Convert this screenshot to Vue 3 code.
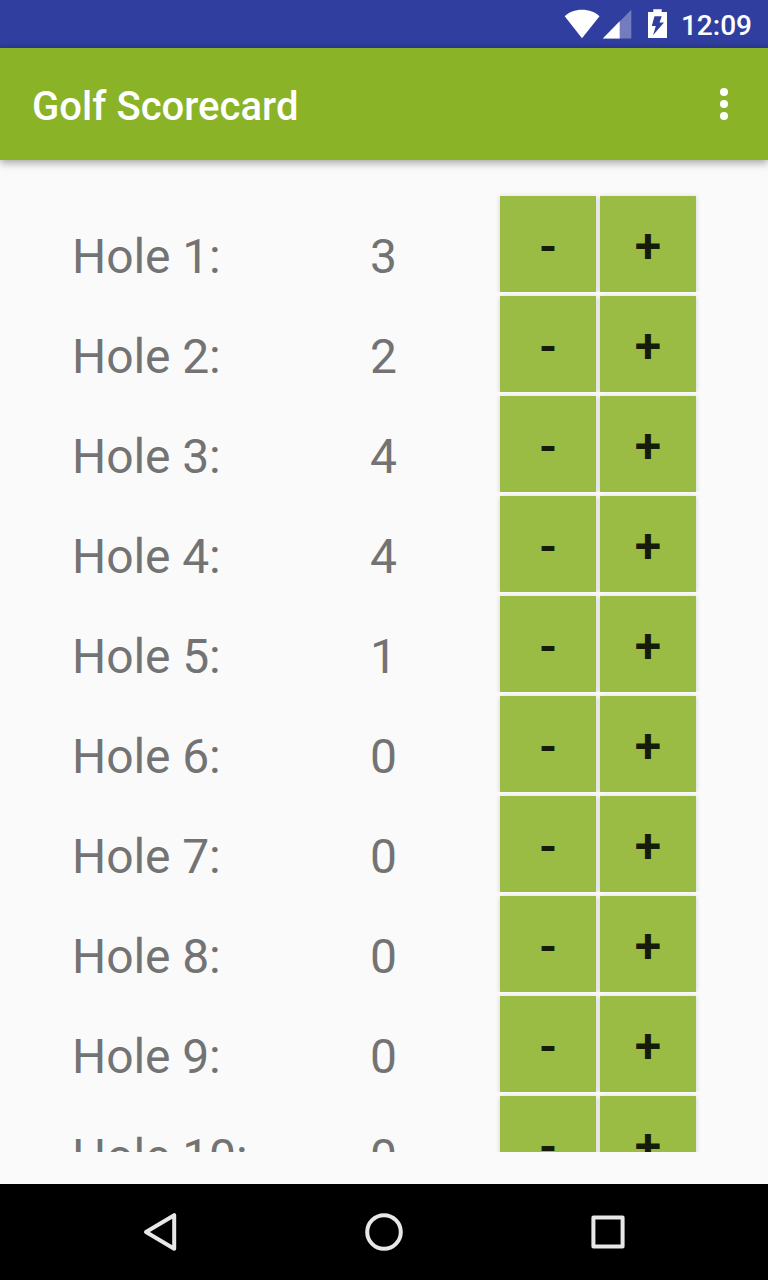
<script setup>
const holes = [3, 2, 4, 4, 1, 0, 0, 0, 0, 0].map((score, i) => ({ label: `Hole ${i + 1}:`, score }))
</script>

<template>
  <div class="screen">
    <header class="status">
      <svg class="status-icons" width="120" height="48" viewBox="556 0 120 48">
        <path d="M564.7 16.2C569 12.2 575 9.8 582 9.8s13.200 2.400 17.500 6.400L582 38.300z" fill="#fff" />
        <path d="M631.300 9.700v28.700H602.800z" fill="#fff" fill-opacity=".32" />
        <path d="M619.700 21.300v17.100H602.800z" fill="#fff" />
        <path fill-rule="evenodd" fill="#fff" d="M653.300 9.200h8.400v2.800h5.300v26h-19V12h5.300zM654.500 16.200h7.300l-2.300 6.400h4.500l-11 12.700 2.800-9.300h-4z" />
      </svg>
      <span class="clock">12:09</span>
    </header>
    <div class="appbar">
      <h1>Golf Scorecard</h1>
      <svg width="8" height="32" viewBox="0 0 8 32" fill="#fff">
        <circle cx="4" cy="4" r="4" /><circle cx="4" cy="16" r="4" /><circle cx="4" cy="28" r="4" />
      </svg>
    </div>
    <main class="content">
      <div class="list">
        <div v-for="hole in holes" :key="hole.label" class="row">
          <span class="label">{{ hole.label }}</span>
          <span class="score">{{ hole.score }}</span>
          <button class="btn minus">-</button>
          <button class="btn plus">+</button>
        </div>
      </div>
    </main>
    <nav class="nav">
      <svg width="768" height="96" viewBox="0 0 768 96" fill="none" stroke="#e8e8e8" stroke-width="4" stroke-linejoin="round">
        <path d="M174.200 31.200v33.600L146 48z" />
        <circle cx="384" cy="48" r="16.800" />
        <rect x="593.400" y="33.400" width="29.200" height="29.200" />
      </svg>
    </nav>
  </div>
</template>

<style>
body { margin: 0; }
</style>

<style scoped>
.screen {
  display: flex;
  flex-direction: column;
  width: 768px;
  height: 1280px;
  overflow: hidden;
  background: #fafafa;
  font-family: Roboto, "Liberation Sans", sans-serif;
}
.status {
  display: flex;
  align-items: center;
  justify-content: flex-end;
  height: 48px;
  padding-right: 16px;
  background: linear-gradient(#303f9f 42px, #2c3a92);
  color: #fff;
}
.status-icons { margin-right: 5px; }
.clock {
  padding-top: 4px;
  font-size: 28px;
  font-weight: 500;
  line-height: 46px;
}
.appbar {
  position: relative;
  display: flex;
  align-items: center;
  justify-content: space-between;
  height: 112px;
  padding: 0 40px 0 32px;
  box-sizing: border-box;
  background: #8bb327;
  color: #fff;
  box-shadow: 0 3px 8px rgba(0, 0, 0, .34);
}
h1 {
  margin: 6px 0 0;
  font-size: 40px;
  font-weight: 500;
  line-height: 48px;
  letter-spacing: .04px;
}
.content {
  flex: 1;
  min-height: 0;
  padding: 32px;
  box-sizing: border-box;
}
.list {
  height: 960px;
  overflow: hidden;
}
.row {
  display: grid;
  grid-template-columns: 298px 130px 96px 96px;
  height: 100px;
  padding: 4px 0 0 40px;
  box-sizing: border-box;
  overflow: hidden;
}
.label, .score {
  padding-top: 33px;
  font-size: 48px;
  line-height: 56px;
  color: #737373;
}
.label { letter-spacing: -.1px; }
.btn {
  width: 96px;
  height: 96px;
  padding: 6px 0 0;
  border: 0;
  border-radius: 0;
  background: #9abc45;
  color: #161b0a;
  font: 600 48px/56px Roboto, "Liberation Sans", sans-serif;
  box-shadow: 0 1px 5px rgba(0, 0, 0, .18);
}
.plus {
  margin-left: 4px;
  padding-top: 4px;
}
.nav {
  height: 96px;
  background: #000;
}
.nav svg { display: block; }
</style>
